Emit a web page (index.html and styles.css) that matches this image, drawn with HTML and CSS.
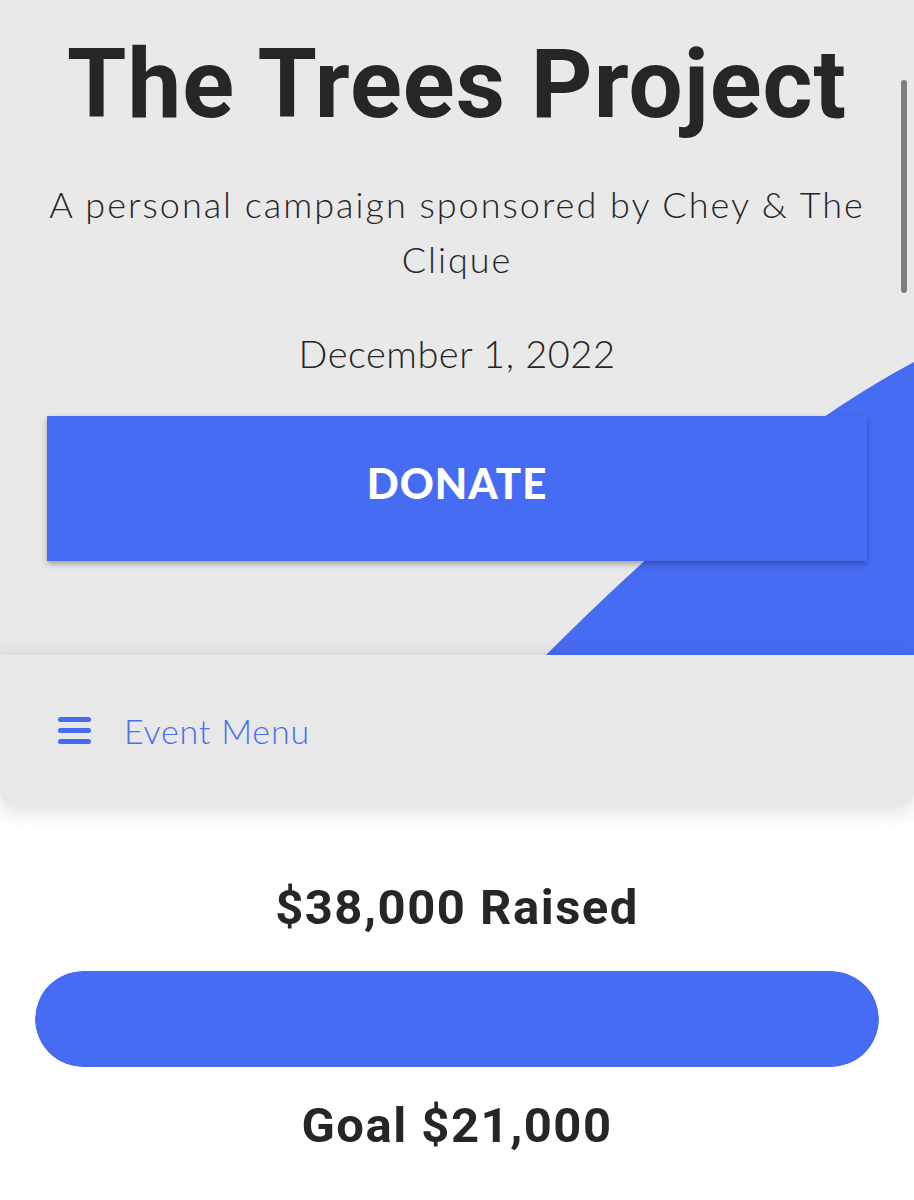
FILE: index.html
```html
<!DOCTYPE html>
<html lang="en">
<head>
    <meta charset="UTF-8">
    <meta name="viewport" content="width=device-width, initial-scale=1.0">
    <title>The Trees Project</title>
    <link rel="stylesheet" href="styles.css">
</head>
<body>
    <header class="hero">
        <svg class="hero__wave" viewBox="0 0 914 655" width="914" height="655" aria-hidden="true">
            <path d="M914 362 Q754 447 546 655 L914 655 Z" fill="#466cf3"/>
        </svg>
        <h1 class="hero__title">The Trees Project</h1>
        <p class="hero__sub">A personal campaign sponsored by Chey &amp; The Clique</p>
        <p class="hero__date">December 1, 2022</p>
        <a class="hero__donate" href="#">DONATE</a>
    </header>

    <nav class="menu">
        <svg class="menu__icon" viewBox="0 0 33 28" width="33" height="28" aria-hidden="true">
            <rect x="0" y="0" width="33" height="5" rx="2.5" fill="#466cf3"/>
            <rect x="0" y="11" width="33" height="5" rx="2.5" fill="#466cf3"/>
            <rect x="0" y="22" width="33" height="5" rx="2.5" fill="#466cf3"/>
        </svg>
        <span class="menu__label">Event Menu</span>
    </nav>

    <section class="stats">
        <h2 class="stats__raised">$38,000 Raised</h2>
        <div class="stats__bar"><div class="stats__fill" style="width: 100%"></div></div>
        <h2 class="stats__goal">Goal $21,000</h2>
    </section>

    <div class="scrollbar"></div>
</body>
</html>
```

FILE: styles.css
```css
html, body {
    margin: 0;
    background-color: #ffffff;
    font-family: Lato, "Open Sans", sans-serif;
    color: #262626;
}

.hero {
    position: relative;
    z-index: 0;
    overflow: hidden;
    background-color: #e9e9e9;
    text-align: center;
    padding: 26px 0 94px 0;
}

.hero__wave {
    position: absolute;
    top: 0;
    left: 0;
    z-index: -1;
}

.hero__title {
    margin: 0;
    font-family: Roboto, "Liberation Sans", sans-serif;
    font-weight: 700;
    font-size: 96px;
    line-height: 116px;
    letter-spacing: 1px;
}

.hero__sub {
    margin: 35px 44px 0 44px;
    font-size: 36px;
    font-weight: 300;
    line-height: 55px;
    letter-spacing: 2px;
}

.hero__date {
    margin: 39px 0 0 0;
    font-size: 38px;
    font-weight: 300;
    line-height: 55px;
    letter-spacing: 0.5px;
}

.hero__donate {
    display: flex;
    align-items: center;
    justify-content: center;
    box-sizing: border-box;
    height: 145px;
    margin: 35px 47px 0 47px;
    padding-bottom: 12px;
    background-color: #466cf3;
    color: #ffffff;
    font-size: 42px;
    font-weight: 900;
    letter-spacing: 1px;
    text-decoration: none;
    box-shadow: 0 3px 6px rgba(0, 0, 0, 0.3);
}

.menu {
    position: relative;
    z-index: 1;
    display: flex;
    align-items: center;
    gap: 33px;
    height: 150px;
    padding-left: 58px;
    background-color: #e8e8e8;
    border-radius: 0 0 14px 14px;
    box-shadow: 0 4px 24px rgba(0, 0, 0, 0.16);
}

.menu__icon {
    margin-top: 2px;
}

.menu__label {
    color: #4a6ef0;
    font-size: 34px;
    font-weight: 300;
    letter-spacing: 0.8px;
}

.stats {
    padding: 75px 35px 40px 35px;
    text-align: center;
}

.stats__raised,
.stats__goal {
    margin: 0;
    font-family: Roboto, "Liberation Sans", sans-serif;
    font-weight: 700;
    font-size: 49px;
    line-height: 56px;
    letter-spacing: 1.5px;
}

.stats__bar {
    height: 96px;
    margin: 35px 0 31px 0;
    border-radius: 48px;
    overflow: hidden;
}

.stats__fill {
    height: 100%;
    background-color: #466cf3;
    border-radius: 48px;
}

.scrollbar {
    position: fixed;
    top: 80px;
    left: 901px;
    width: 6px;
    height: 213px;
    border-radius: 3px;
    background-color: #7f7f7f;
}
```
